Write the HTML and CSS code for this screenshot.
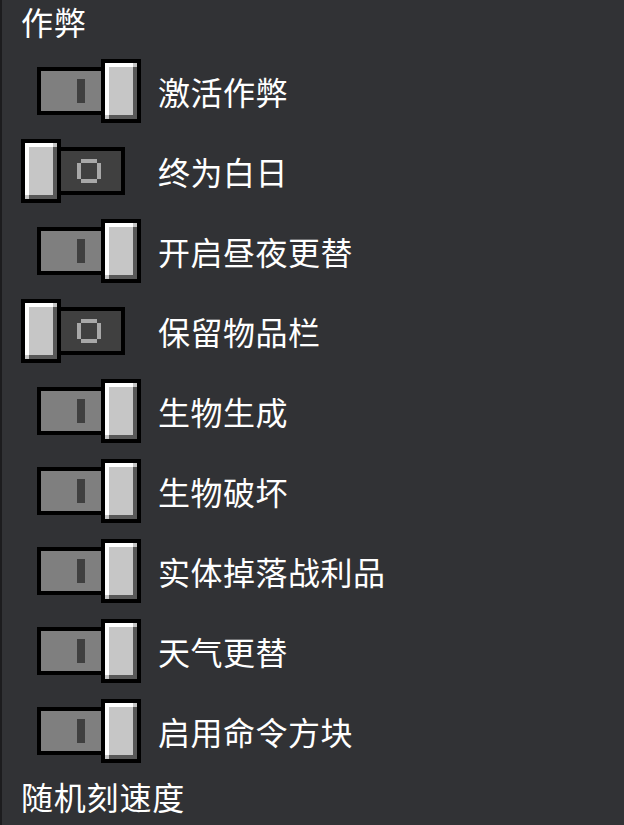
FILE: index.html
```html
<!DOCTYPE html>
<html lang="zh-CN">
<head>
    <meta charset="UTF-8">
    <meta name="viewport" content="width=device-width, initial-scale=1.0">
    <title>作弊</title>
    <link rel="stylesheet" href="styles.css">
</head>
<body>
    <div class="panel">
        <h2 class="section-title">作弊</h2>

        <div class="option">
            <div class="switch on"><div class="track"><span class="mark"></span></div><div class="knob"></div></div>
            <span class="label">激活作弊</span>
        </div>
        <div class="option">
            <div class="switch off"><div class="knob"></div><div class="track"><span class="mark"></span></div></div>
            <span class="label">终为白日</span>
        </div>
        <div class="option">
            <div class="switch on"><div class="track"><span class="mark"></span></div><div class="knob"></div></div>
            <span class="label">开启昼夜更替</span>
        </div>
        <div class="option">
            <div class="switch off"><div class="knob"></div><div class="track"><span class="mark"></span></div></div>
            <span class="label">保留物品栏</span>
        </div>
        <div class="option">
            <div class="switch on"><div class="track"><span class="mark"></span></div><div class="knob"></div></div>
            <span class="label">生物生成</span>
        </div>
        <div class="option">
            <div class="switch on"><div class="track"><span class="mark"></span></div><div class="knob"></div></div>
            <span class="label">生物破坏</span>
        </div>
        <div class="option">
            <div class="switch on"><div class="track"><span class="mark"></span></div><div class="knob"></div></div>
            <span class="label">实体掉落战利品</span>
        </div>
        <div class="option">
            <div class="switch on"><div class="track"><span class="mark"></span></div><div class="knob"></div></div>
            <span class="label">天气更替</span>
        </div>
        <div class="option">
            <div class="switch on"><div class="track"><span class="mark"></span></div><div class="knob"></div></div>
            <span class="label">启用命令方块</span>
        </div>

        <h2 class="section-title bottom">随机刻速度</h2>
    </div>
</body>
</html>
```

FILE: styles.css
```css
:root {
    --bg: #313235;
    --edge: #1c1c1e;
    --knob: #c6c6c6;
    --knob-light: #ffffff;
    --knob-dark: #585858;
    --track-on: #7f7f7f;
    --track-off: #404040;
    --ring: #a8a8a8;
}

* {
    box-sizing: border-box;
    margin: 0;
    padding: 0;
}

html, body {
    height: 100%;
}

body {
    background: var(--bg);
    color: #ffffff;
    font-family: "Noto Sans CJK SC", "Noto Sans", sans-serif;
    overflow: hidden;
}

.panel {
    min-height: 100%;
    border-left: 2px solid var(--edge);
}

.section-title {
    font-size: 32px;
    font-weight: normal;
    letter-spacing: 0.8px;
    height: 51px;
    line-height: 42px;
    padding-left: 19px;
}

.section-title.bottom {
    height: 54px;
    line-height: 50px;
}

.option {
    display: flex;
    align-items: center;
    height: 80px;
    padding-left: 19px;
    gap: 17px;
}

.label {
    font-size: 32px;
    line-height: 40px;
    letter-spacing: 0.5px;
}

/* switch: track 88x48, knob 40x64 overlapping by 24px */
.switch {
    display: flex;
    align-items: center;
    width: 120px;
    height: 64px;
}

.track {
    display: flex;
    align-items: center;
    width: 88px;
    height: 48px;
    border: 4px solid #000;
    padding-left: 36px;
}

.switch.on .track {
    margin-left: 16px;
    background: var(--track-on);
}

.switch.off .track {
    margin-left: -24px;
    background: var(--track-off);
}

.knob {
    position: relative;
    z-index: 1;
    width: 40px;
    height: 64px;
    flex-shrink: 0;
    border: 4px solid #000;
    background:
        linear-gradient(var(--knob-light), var(--knob-light)) left top / calc(100% - 4px) 4px no-repeat,
        linear-gradient(var(--knob-light), var(--knob-light)) left top / 4px calc(100% - 4px) no-repeat,
        linear-gradient(var(--knob-dark), var(--knob-dark)) right bottom / 4px calc(100% - 4px) no-repeat,
        linear-gradient(var(--knob-dark), var(--knob-dark)) right bottom / calc(100% - 4px) 4px no-repeat,
        var(--knob);
}

.switch.on .knob {
    margin-left: -24px;
}

.mark {
    display: block;
}

.switch.on .mark {
    width: 8px;
    height: 24px;
    background: var(--track-off);
}

.switch.off .mark {
    width: 24px;
    height: 24px;
    background:
        linear-gradient(var(--ring), var(--ring)) 4px 0 / 16px 4px no-repeat,
        linear-gradient(var(--ring), var(--ring)) 4px 20px / 16px 4px no-repeat,
        linear-gradient(var(--ring), var(--ring)) 0 4px / 4px 16px no-repeat,
        linear-gradient(var(--ring), var(--ring)) 20px 4px / 4px 16px no-repeat;
}
```
